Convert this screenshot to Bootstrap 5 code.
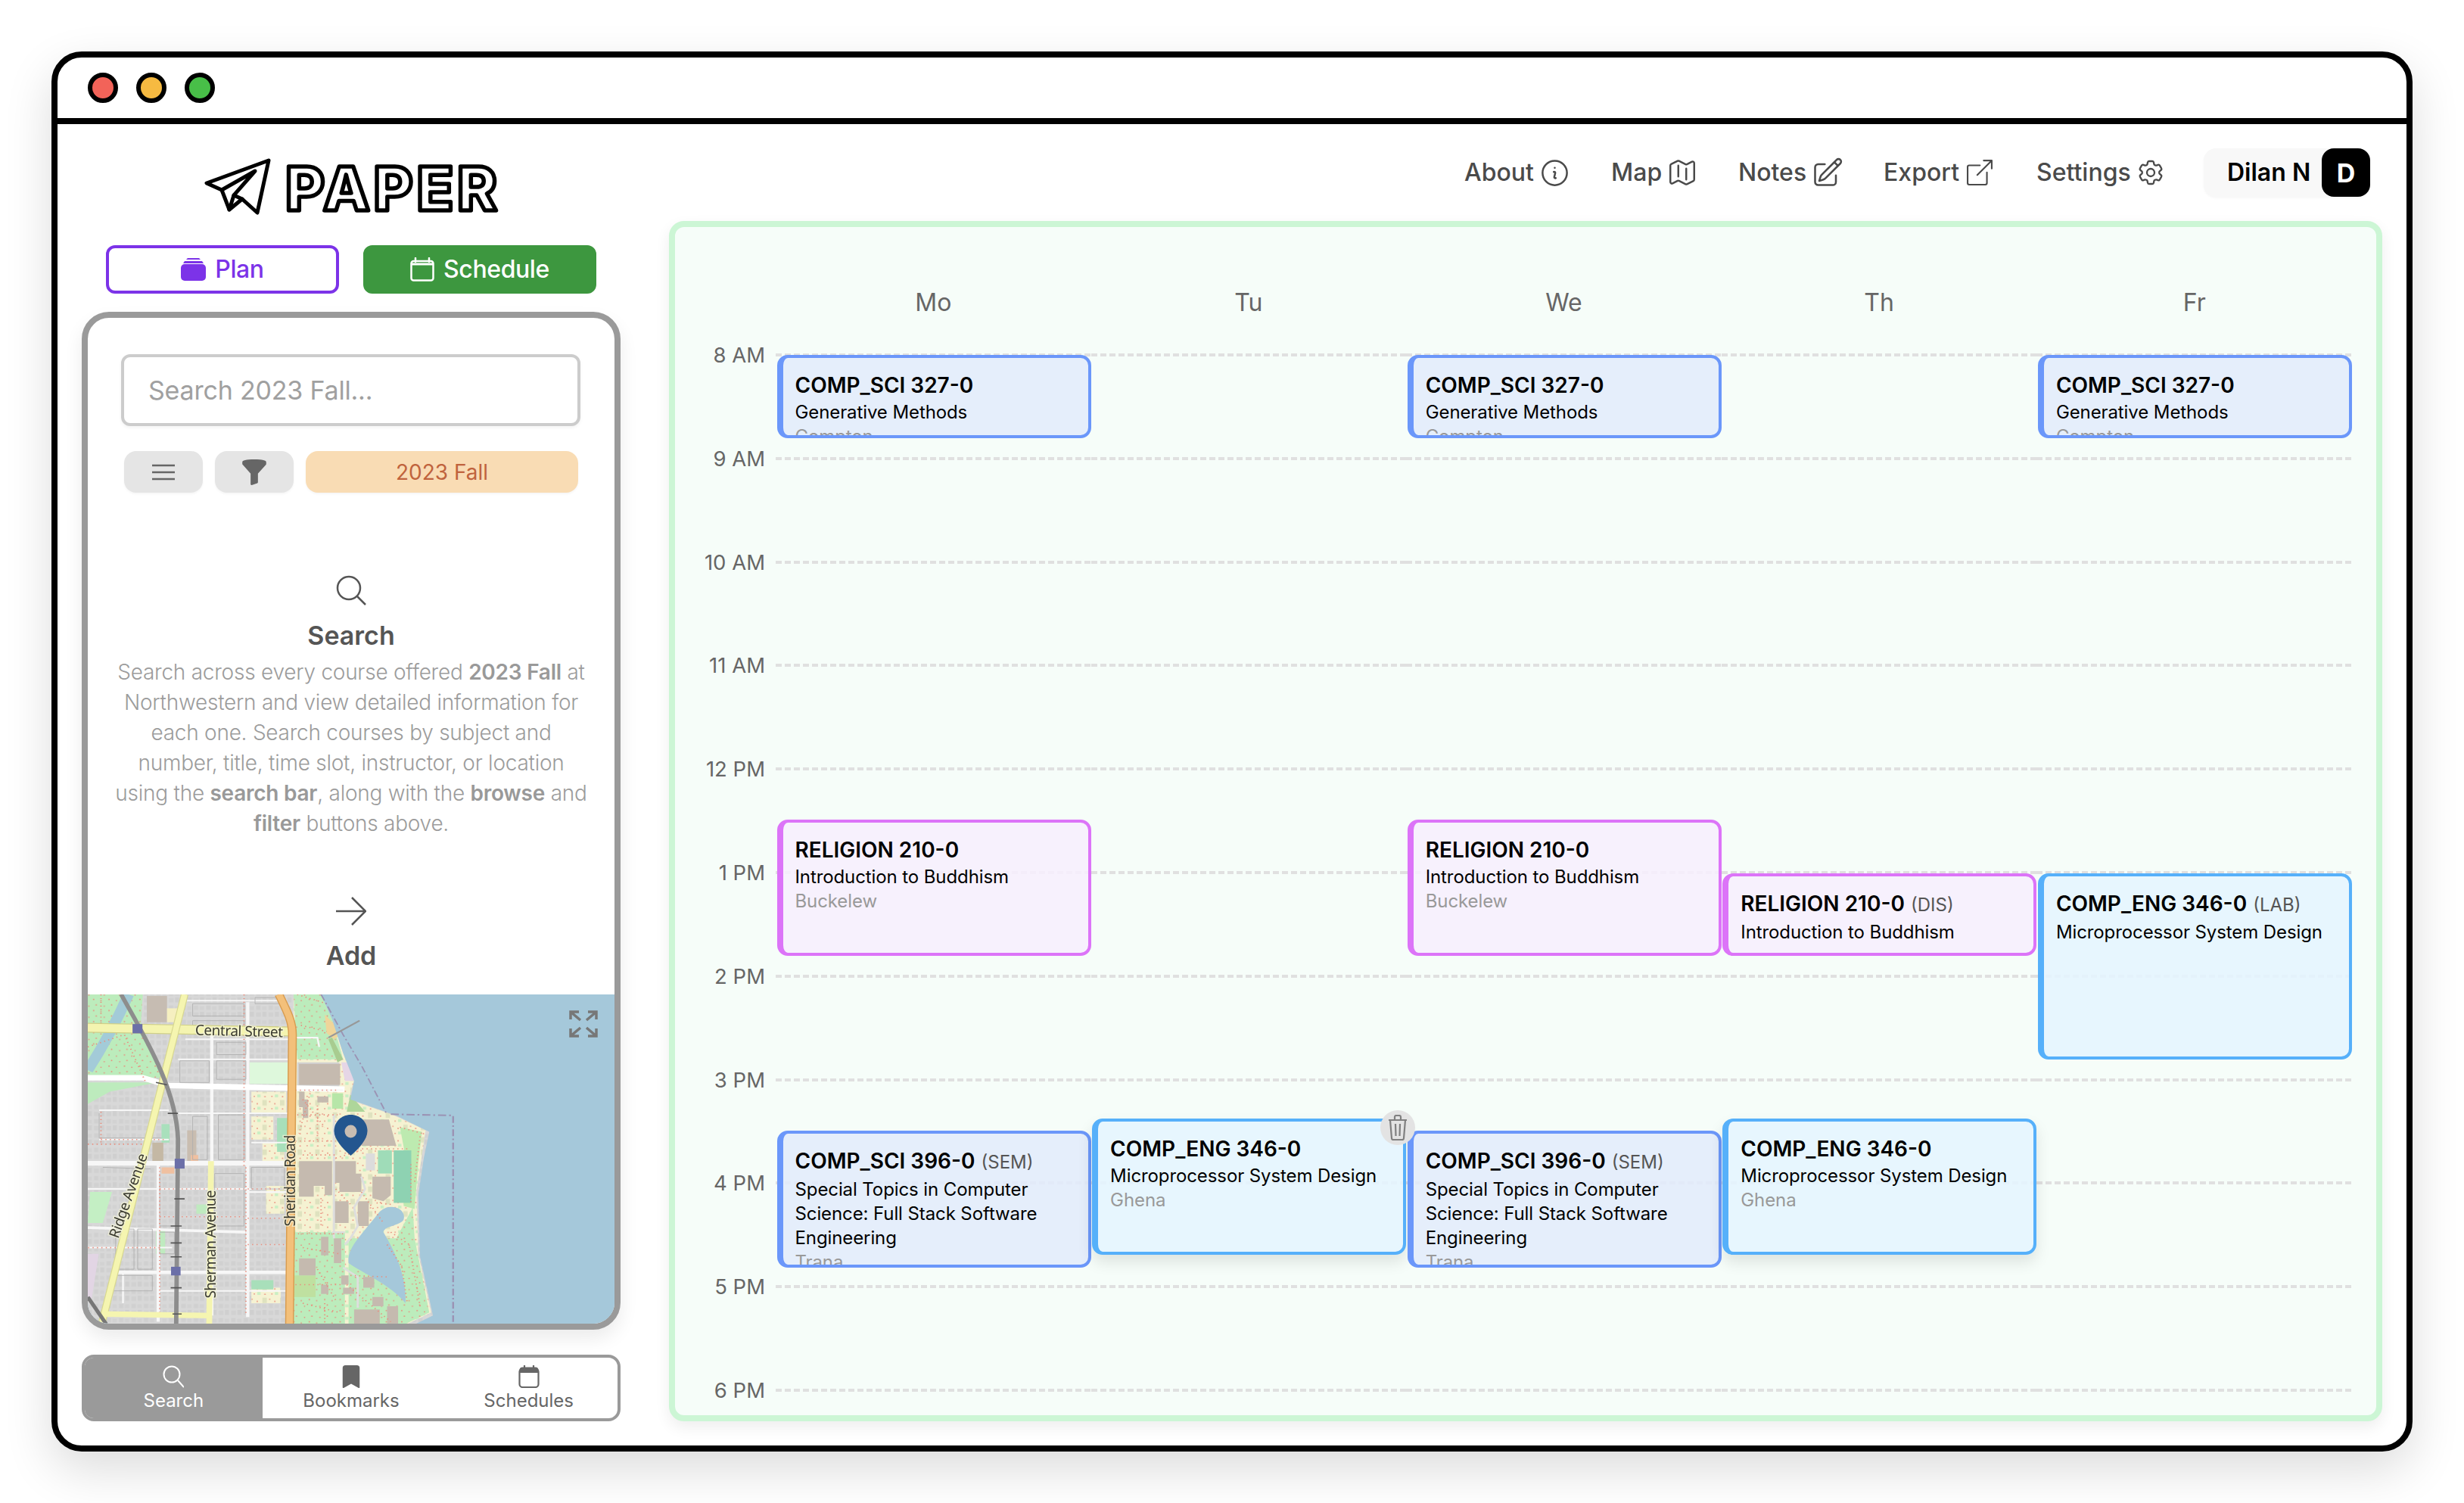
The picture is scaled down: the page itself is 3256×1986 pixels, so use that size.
<!doctype html>
<html lang="en">
<head>
<meta charset="utf-8">
<title>Paper</title>
<link href="https://cdn.jsdelivr.net/npm/bootstrap@5.3.0/dist/css/bootstrap.min.css" rel="stylesheet">
<style>
html,body{background:#fff;margin:0;height:1986px;overflow:hidden;font-family:Inter,"Liberation Sans",sans-serif}
svg{display:block;flex:none}
.win{margin:68px 0 0 68px;width:3120px;height:1850px;border:8px solid #000;border-radius:40px;background:#fff;box-shadow:0 24px 64px rgba(0,0,0,.14);overflow:hidden}
.titlebar{height:80px;border-bottom:8px solid #000;padding-left:40px;gap:24px;box-sizing:content-box}
.tl{width:40px;height:40px;border-radius:50%;border:6px solid #000}
.main-area{height:1746px}
.leftcol{width:744px;padding-left:32px;flex:none}
.logo{height:76px;margin-top:44px;margin-bottom:40px;gap:14px;padding-left:162px}
.logotext{font-family:Inter,sans-serif;font-weight:800;font-size:80px;fill:#fff;stroke:#000;stroke-width:5.5px;stroke-linejoin:round}
.modes{padding:0 32px;gap:32px;margin-bottom:24px}
.modebtn{flex:1 1 0;height:64px;border-radius:12px;font-size:32px;font-weight:500;line-height:1;padding:0;gap:12px;border:4px solid transparent;letter-spacing:-.4px}
.modeplan,.modeplan:hover{border-color:#7c33e8;color:#7c33e8;background:#fff}
.modesched,.modesched:hover{border-color:#3d973f;background:#3d973f;color:#fff}
.panel{height:1345px;border:8px solid #9a9a9a;border-radius:36px;box-shadow:0 12px 24px rgba(0,0,0,.08);overflow:hidden;background:#fff}
.searchbox.form-control{margin:48px 45px 0 44px;width:607px;height:95px;flex:none;border:4px solid #ccc;border-radius:12px;font-size:34px;padding:0 32px;box-shadow:0 2px 4px rgba(0,0,0,.05);color:#555;letter-spacing:-.2px}
.searchbox::placeholder{color:#a0a0a0}
.filterrow{margin:33px 48px 0;gap:16px;height:55px;flex:none}
.chip{height:55px;border-radius:16px;background:#e5e5e5;width:104px;box-shadow:0 2px 3px rgba(0,0,0,.04)}
.chipterm{flex:1;width:auto;background:#f9dcb4;color:#c0633d;font-size:28px;font-weight:400}
.helpzone{flex:1;min-height:0;overflow:hidden;color:#555}
.helphead{font-size:34px;font-weight:600;line-height:56px;color:#555}
.helptext{font-size:28px;line-height:40px;color:#9c9c9c;font-weight:300;padding:0 20px;margin:0;letter-spacing:-.25px}
.helptext b{font-weight:600;color:#999}
.mapwrap{height:435px;flex:none;overflow:hidden;position:relative;background:#a5c8da}
.mapwrap svg.base{filter:blur(.7px)}
.fsicon{position:absolute;right:22px;top:21px}
.maplabel{font-family:"Noto Sans",sans-serif;fill:#3a3a30;paint-order:stroke;stroke:#f4f4d8;stroke-width:3px;stroke-opacity:.7}
.tabsbar{height:88px;margin-top:33px;border:4px solid #9a9a9a;border-radius:16px;overflow:hidden;background:#fff}
.tabitem{flex:1 1 0;font-size:24px;line-height:30px;color:#666;gap:2px;padding-top:10px}
.tabon{background:#9a9a9a;color:#fff}
.rightcol{margin-left:64px;width:2264px;flex:none}
.topnav{position:relative;height:128px;padding-right:16px;font-size:32px;font-weight:500;color:#4a4a4a}
.navlink{display:flex;align-items:center;gap:6px;position:absolute;top:0;height:128px}
.profile{position:absolute;right:16px;top:32px;width:220px;height:64px;background:#f8f8f8;border-radius:16px;padding-left:31px;color:#000;font-weight:600;box-shadow:0 2px 3px rgba(0,0,0,.03)}
.avatar{width:64px;height:64px;border-radius:16px;background:#000;color:#fff;position:absolute;right:0;top:0;font-weight:700;font-size:34px}
.cal{position:relative;height:1586px;border:8px solid #ccf6d5;border-radius:20px;background:#f6fdf9;box-shadow:0 8px 20px rgba(0,0,0,.07)}
.dayhead{height:167px;padding-left:133px;padding-right:32px}
.dayname{flex:1 1 0;text-align:center;font-size:32px;line-height:40px;color:#666;padding-top:80px}
.hourrow{height:136.8px;padding-right:32px}
.hourlabel{width:119px;margin-right:14px;text-align:right;font-size:27.5px;line-height:40px;color:#666;margin-top:-18px;flex:none}
.cell{flex:1 1 0;height:4px;background:repeating-linear-gradient(90deg,#e0e0e0 0 8px,transparent 8px 12px)}
.evlayer{position:absolute;left:133px;top:167px;width:2083px;height:1368px;display:grid;grid-template-columns:repeat(5,1fr)}
.evcol{position:relative}
.ev{position:absolute;left:1.5px;right:0;border-style:solid;border-width:4px 4px 4px 8px;border-radius:14px;padding:16px;overflow:hidden;font-size:24px;line-height:32px;color:#000;letter-spacing:-.1px}
.ev h6{font-size:28px;line-height:40px;font-weight:600;margin:-4px 0 0;padding-top:4px;white-space:nowrap;color:#000;letter-spacing:0}
.ev h6 span{font-size:24px;font-weight:400;color:#555;margin-left:1px}
.ev div.who{color:#999}
.evblue{border-color:#6b97fa;background:rgba(226,235,252,.85)}
.evpink{border-color:#dc74f8;background:rgba(247,238,254,.85)}
.evsky{border-color:#56b0fa;background:rgba(228,244,255,.85)}
.evlift{box-shadow:0 10px 20px rgba(0,0,0,.1)}
.trashbadge{position:absolute;left:382px;top:1000px;width:46px;height:46px;border-radius:50%;background:#e3e3e3;z-index:3}
</style>
</head>
<body>
<div class="win">
  <div class="titlebar d-flex align-items-center">
    <div class="tl" style="background:#f26359"></div>
    <div class="tl" style="background:#f6ba41"></div>
    <div class="tl" style="background:#48bf48"></div>
  </div>
  <div class="main-area d-flex">
    <div class="leftcol">
      <div style="width:712px">
        <div class="logo d-flex align-items-center">
          <svg width="90" height="76" viewBox="0 0 90 76" fill="none" stroke="#000" stroke-width="5" stroke-linejoin="round" stroke-linecap="round"><path d="M85 4 3 34l20 9 10 26 17-14 20 18z"/><path d="M23 43 67 18 39 50l-6 19"/><path d="M39 50l11 5"/></svg>
          <svg width="300" height="76" viewBox="0 0 300 76"><text class="logotext" x="3" y="70" textLength="280" lengthAdjust="spacing">PAPER</text></svg>
        </div>
        <div class="modes d-flex">
          <button class="btn modebtn modeplan d-flex align-items-center justify-content-center">
            <svg width="33" height="30" viewBox="0 0 33 30" fill="#7c33e8"><path d="M9 0h15l2 2H7z"/><path d="M5 4h23l2 3H3z"/><rect y="8" width="33" height="22" rx="5"/></svg>Plan</button>
          <button class="btn modebtn modesched d-flex align-items-center justify-content-center">
            <svg width="32" height="32" viewBox="0 0 32 32" fill="none" stroke="#fff" stroke-width="2.5"><rect x="1.5" y="5" width="29" height="25.5" rx="3"/><path d="M1.5 9h29" stroke-width="3"/><path d="M7 1v5M25 1v5" stroke-linecap="round"/></svg>Schedule</button>
        </div>
        <div class="panel d-flex flex-column">
          <input class="form-control searchbox" type="text" placeholder="Search 2023 Fall...">
          <div class="filterrow d-flex">
            <div class="chip d-flex align-items-center justify-content-center">
              <svg width="30" height="22" viewBox="0 0 30 22" stroke="#666" stroke-width="2.5"><path d="M0 2h30M0 11h30M0 20h30"/></svg>
            </div>
            <div class="chip d-flex align-items-center justify-content-center">
              <svg width="34" height="34" viewBox="1 1 14 14" fill="#666"><path d="M1.5 2.5c0-1 2-1.5 6.500-1.500s6.500.5 6.500 1.500v1c0 .2-.05.25-.13.34L10 8.700v4.800c0 .2-.13.4-.34.470l-3 1c-.32.110-.66-.130-.66-.470V8.700L1.630 3.830A.5.5 0 0 1 1.500 3.500z"/></svg>
            </div>
            <div class="chip chipterm d-flex align-items-center justify-content-center">2023 Fall</div>
          </div>
          <div class="helpzone text-center">
            <svg class="mx-auto" style="margin-top:109px" width="40" height="40" viewBox="0 0 40 40" fill="none" stroke="#555" stroke-width="2.500"><circle cx="17" cy="17" r="15"/><path d="m28 28 11 11"/></svg>
            <div class="helphead" style="margin-top:12px">Search</div>
            <p class="helptext">Search across every course offered <b>2023 Fall</b> at<br>Northwestern and view detailed information for<br>each one. Search courses by subject and<br>number, title, time slot, instructor, or location<br>using the <b>search bar</b>, along with the <b>browse</b> and<br><b>filter</b> buttons above.</p>
            <svg class="mx-auto" style="margin-top:76px" width="40" height="40" viewBox="0 0 40 40" fill="none" stroke="#555" stroke-width="2.500"><path d="M0 20h38M21 2l18 18-18 18"/></svg>
            <div class="helphead" style="margin-top:11px">Add</div>
          </div>
          <div class="mapwrap">
            <svg class="base" width="696" height="435" viewBox="0 0 696 435">
              <defs>
                <pattern id="houses" width="34" height="46" patternUnits="userSpaceOnUse"><rect width="34" height="46" fill="#d8d8d8"/><rect x="3" y="4" width="12" height="14" fill="#d0d0d0"/><rect x="19" y="6" width="12" height="12" fill="#d2d2d2"/><rect x="3" y="26" width="13" height="14" fill="#d1d1d1"/><rect x="20" y="24" width="11" height="16" fill="#cfcfcf"/></pattern>
                <pattern id="campus" width="48" height="40" patternUnits="userSpaceOnUse"><rect width="48" height="40" fill="#f5f2d2"/><rect x="2" y="2" width="12" height="18" fill="#dfe2bf"/><circle cx="22" cy="7" r="2" fill="#e98d7d"/><circle cx="36" cy="14" r="2" fill="#e98d7d"/><circle cx="9" cy="31" r="2" fill="#e98d7d"/><circle cx="28" cy="30" r="2" fill="#e98d7d"/><rect x="36" y="24" width="9" height="9" fill="#c9efc3"/></pattern>
                <pattern id="parkdots" width="42" height="36" patternUnits="userSpaceOnUse"><rect width="42" height="36" fill="#bcecbc"/><circle cx="6" cy="8" r="2" fill="#e98d7d"/><circle cx="28" cy="4" r="2" fill="#e98d7d"/><circle cx="15" cy="26" r="2" fill="#e98d7d"/><circle cx="35" cy="22" r="2" fill="#e98d7d"/></pattern>
              </defs>
              <g transform="scale(.4847 .408) translate(-54 -60)">
                <rect x="54" y="60" width="1436" height="1067" fill="url(#houses)"/>
                <path d="M54 60h150l-5 90 60 180H54z" fill="url(#parkdots)"/>
                <path d="M54 345h190l-130 30-60 40z" fill="#bdebbd"/>
                <path d="M60 700h60l-25 100H54z" fill="#c4efc4"/>
                <path d="M54 900h30l-20 150H54z" fill="#e2d5e4"/>
                <path d="M165 60c-30 80-70 170-111 245" stroke="#a3cbd8" stroke-width="30" fill="none"/>
                <rect x="215" y="65" width="55" height="85" fill="#c6bcb2"/>
                <rect x="270" y="105" width="30" height="45" fill="#f5efc0"/>
                <rect x="495" y="280" width="105" height="70" fill="#def8dc"/>
                <rect x="255" y="480" width="22" height="60" fill="#a9e0bc"/>
                <path d="M325 500h25v100h-25z" fill="#c9bdb0"/>
                <path d="M230 540h30v60h-30z" fill="#c4b8a4"/>
                <path d="M500 375h95v70h-95zM500 455h60v75h-60zM530 540h60v60h-60zM540 680h50v90h-50zM500 1010h80v50h-80z" fill="url(#campus)"/>
                <path d="M570 460h30v110h-30zM500 985h60v30h-60z" fill="#a8dfba"/>
                <path d="M255 620h35v20h-35zM335 580h20v20h-20z" fill="#f0c0a0"/>
                <path d="M240 820h25v80h-25zM350 740h30v30h-30z" fill="#bfeabf"/>
                <path d="M615 60h75l30 80 30 110 30 90-15 60 120 50 90 50-10 80-15 120 5 200 35 190-35 20-30 17H615z" fill="url(#campus)"/>
                <path d="M615 60h75l30 80 30 130H625z" fill="url(#parkdots)"/>
                <path d="M625 280h115v80H625z" fill="#d2d2d2"/>
                <rect x="630" y="285" width="112" height="68" fill="#c5baaf"/>
                <path d="M745 280h35v60h-25z" fill="#e6d6e6"/>
                <path d="M700 125l50 60-25 20-20-20z" fill="#efd59a"/>
                <path d="M720 200l30 70-15 10-25-75z" fill="#a8cc90"/>
                <path d="M770 385l40 55h-50z" fill="#aed69a"/>
                <path d="M615 830h140v297H615z" fill="url(#parkdots)"/>
                <path d="M615 970h60v70h-60z" fill="#bfe0a0"/>
                <path d="M765 850h130l45-100 5 100 40 240-35 20-30 17H765z" fill="url(#parkdots)"/>
                <path d="M905 490l60 15-10 100-10 150-30-10 10-130z" fill="#bdeab0"/>
                <path d="M800 465l75 0 20 85H800z" fill="#c5baaf"/>
                <path d="M630 600h90v110h-20v-30h-30v35h-40zM725 600h60v70h-60zM740 640h60v60h-60zM830 650h50v60l-20 20-30-10zM725 730h40v70h-40zM790 730h30v80h-30zM630 915h45v55h-45zM690 845h20v60h-20zM725 850h20v80h-20zM745 970h20v30h-20zM805 975h30v35h-30zM690 1000h20v30h-20zM750 1010h30v20h-30zM830 1040h30v30h-30zM780 1080h70v47h-70zM870 1070h30v57h-30zM640 400h15v60h-15zM680 390h30v20h-30zM630 375h15v50h-15z" fill="#c5baaf"/>
                <rect x="845" y="565" width="38" height="75" fill="#9fdcb8"/><rect x="888" y="565" width="48" height="170" fill="#8ed2b2"/>
                <rect x="812" y="575" width="25" height="55" fill="#dcdcdc"/>
                <path d="M720 380h30v50h-30z" fill="#b7e6a8"/>
                <path d="M690 60l30 80 30 110 30 90-10 60 120 50 95 55-15 85-15 120 5 200 35 190-35 20-30 17H1490V60z" fill="#a5c8da"/>
                <path d="M845 770c25-40 80-20 70 20-10 20-55 20-55 40 20 40 65 130 60 230-40-60-120-100-155-130-5-50 35-90 80-160z" fill="#a5c8da"/>
                <g fill="none" stroke="#f7f7f7" stroke-width="11">
                  <path d="M392 190v410M490 85v1020M246 610v510M392 700v400" stroke-width="9"/>
                  <path d="M54 330h150l70 25 480 12" stroke-width="18" stroke="#fff"/>
                  <path d="M54 607h540" stroke-width="15"/><path d="M120 960h480" stroke-width="11"/><path d="M54 815l430 15" stroke-width="9"/>
                  <path d="M280 445h320M85 435h190M85 530h190M54 690h540M320 80h260M320 205h280M300 270h300M54 880h230M250 1020h350M150 960v100M490 700h110M500 540h100" stroke-width="5"/>
                  <path d="M725 450v400M720 830h35M750 945l40 30v100M800 650l10 40-30 60 10 60-20 40-15 20" stroke="#dedede" stroke-width="6"/>
                  <path d="M620 200h60l5 30M750 370h-125" stroke-width="5"/>
                </g>
                <g fill="none" stroke="#aeaeae" stroke-width="2">
                  <path d="M85 445v80h170M305 275h80v70h-80zM405 215h80v40h-80zM405 275h80v60h-80zM95 620l130 5M250 640v170h50M400 640h80v170h-80zM410 450h70v145h-70zM340 455h40v140h-40zM250 830h40v70h-40zM120 970h110v50H120zM130 820h50v130h-50zM190 820h40v130h-40zM510 70h70v20h-70zM340 90h140v40H340zM340 145h140v40H340zM500 620h90v70h-90z"/>
                </g>
                <g fill="none" stroke="#e98d7d" stroke-width="4" stroke-dasharray="3 9">
                  <path d="M90 60v110M54 230l100-40M150 180l60 160M480 60v560M485 620v480M250 620v480M90 530h180M54 545h160M90 440v100M55 880h200M250 690h230M250 780h230M490 690h110M490 785h110M490 870h110M625 60l80 30M635 160l70 20M620 370h120M625 450h110M640 400l60 90M660 380l-30 130M680 420v120M620 535h110M640 580h90M730 690l40 50M690 720v90M615 835h140M640 880l100 20M620 1000l130 0M640 1060l100 30M680 950l50 100M770 970l100 5M880 830l50 40 30 200M870 870l40 70 15 120M935 610v130M905 490l60 20M960 520l-15 150M880 740l-40-5M800 700l60 100M760 1000l120 120M700 1060v60M790 560h140M730 590l70-25"/>
                </g>
                <path d="M54 168l556 12" stroke="#cfcf88" stroke-width="32" fill="none"/>
                <path d="M54 168l556 12" stroke="#f4f4b0" stroke-width="26" fill="none"/>
                <path d="M318 60 92 1127" stroke="#d8d890" stroke-width="21" fill="none"/>
                <path d="M318 60 92 1127" stroke="#f5f5b0" stroke-width="16" fill="none"/>
                <path d="M95 1095l290 5" stroke="#f5f5b0" stroke-width="18" fill="none"/>
                <path d="M390 600l-5 527" stroke="#f5f5b0" stroke-width="16" fill="none"/>
                <path d="M575 60c25 60 37 90 37 130l-8 937" stroke="#d89c50" stroke-width="24" fill="none"/>
                <path d="M575 60c25 60 37 90 37 130l-8 937" stroke="#f3c07a" stroke-width="18" fill="none"/>
                <path d="M145 60c60 130 150 300 155 470l-5 597" stroke="#8d8d8d" stroke-width="12" fill="none"/>
                <path d="M54 1040l50 87" stroke="#777" stroke-width="11" fill="none"/>
                <g fill="none" stroke="#555" stroke-width="4"><path d="M240 345l30 8M272 445h28M290 722h28M280 810h30M280 865h30M280 910h30M280 1010h30M285 1095h25"/></g>
                <rect x="176" y="156" width="27" height="30" fill="#6b6fa8"/><rect x="291" y="592" width="27" height="32" fill="#6b6fa8"/><rect x="281" y="942" width="26" height="28" fill="#6b6fa8"/>
                <path d="M880 448l170 4v675" fill="none" stroke="#9b93b4" stroke-width="5" stroke-dasharray="22 8 5 8"/>
                <path d="M690 60l60 130 50 100 70 160" fill="none" stroke="#9b93b4" stroke-width="4" stroke-dasharray="22 8 5 8"/>
                <path d="M710 200l85-55" stroke="#989898" stroke-width="5" fill="none"/>
              </g>
              <text class="maplabel" x="142" y="55" font-size="19" textLength="116" transform="rotate(1.500 200 48)">Central Street</text>
              <text class="maplabel" transform="translate(54 266) rotate(-70.500)" text-anchor="middle" y="6" font-size="19" textLength="117">Ridge Avenue</text>
              <text class="maplabel" transform="translate(163 330) rotate(-90)" text-anchor="middle" y="6" font-size="19" textLength="143">Sherman Avenue</text>
              <text class="maplabel" transform="translate(268 246) rotate(-90)" text-anchor="middle" y="6" font-size="19" textLength="121">Sheridan Road</text>
              <path d="M347.500 159c-12.500 0-22 9.500-22 21.500 0 11 11 23 22 32.500 11-9.500 22-21.500 22-32.500 0-12-9.500-21.500-22-21.500z" fill="#23568f"/>
              <ellipse cx="347.500" cy="181" rx="8" ry="8.500" fill="#c8bdb2"/>
            </svg>
            <svg class="fsicon" width="38" height="36" viewBox="0 0 38 36" fill="none" stroke="#777" stroke-width="3.500"><path d="M2 12V2h11M2 2l13 11M36 12V2H25M36 2 23 13M2 24v10h11M2 34l13-11M36 24v10H25M36 34 23 23"/></svg>
          </div>
        </div>
        <div class="tabsbar d-flex">
          <div class="tabitem tabon d-flex flex-column align-items-center">
            <svg width="28" height="30" viewBox="0 0 28 30" fill="none" stroke="#fff" stroke-width="2"><circle cx="12" cy="12" r="10.500"/><path d="m20 20 8 9"/></svg>Search</div>
          <div class="tabitem d-flex flex-column align-items-center">
            <svg width="30" height="30" viewBox="2 0 12 16" fill="#666"><path d="M2 2v13.500a.5.5 0 0 0 .74.439L8 13.069l5.260 2.870A.5.5 0 0 0 14 15.500V2a2 2 0 0 0-2-2H4a2 2 0 0 0-2 2z"/></svg>Bookmarks</div>
          <div class="tabitem d-flex flex-column align-items-center">
            <svg width="28" height="30" viewBox="0 0 28 30" fill="none" stroke="#666" stroke-width="2.200"><rect x="1.500" y="4.500" width="25" height="24.500" rx="4"/><path d="M1.500 5.500a4 4 0 0 1 4-3h17a4 4 0 0 1 4 3V10h-25z" fill="#666" stroke="none"/><path d="M8 0v4M20 0v4"/></svg>Schedules</div>
        </div>
      </div>
    </div>
    <div class="rightcol">
      <div class="topnav">
        <span class="navlink" style="left:1051px">About <svg width="43" height="43" viewBox="0 0 24 24" fill="none" stroke="#4a4a4a" stroke-width="1.400" stroke-linecap="round" stroke-linejoin="round"><path d="M11.250 11.250l.041-.02a.75.75 0 011.063.852l-.708 2.836a.75.75 0 001.063.853l.041-.021M21 12a9 9 0 11-18 0 9 9 0 0118 0zm-9-3.750h.008v.008H12V8.250z"/></svg></span>
        <span class="navlink" style="left:1245px">Map <svg width="42" height="42" viewBox="0 0 24 24" fill="none" stroke="#4a4a4a" stroke-width="1.400" stroke-linecap="round" stroke-linejoin="round"><path d="M9 6.750V15m6-6v8.250m.503 3.498l4.875-2.437c.381-.19.622-.58.622-1.006V4.820c0-.836-.88-1.380-1.628-1.006l-3.869 1.934c-.317.159-.69.159-1.006 0L9.503 3.252a1.125 1.125 0 00-1.006 0L3.622 5.689C3.240 5.880 3 6.270 3 6.695V19.180c0 .836.88 1.380 1.628 1.006l3.869-1.934c.317-.159.69-.159 1.006 0l4.994 2.497c.317.158.69.158 1.006 0z"/></svg></span>
        <span class="navlink" style="left:1413px">Notes <svg width="44" height="44" viewBox="0 0 24 24" fill="none" stroke="#4a4a4a" stroke-width="1.400" stroke-linecap="round" stroke-linejoin="round"><path d="M16.862 4.487l1.687-1.688a1.875 1.875 0 112.652 2.652L10.582 16.070a4.500 4.500 0 01-1.897 1.130L6 18l.8-2.685a4.500 4.500 0 011.130-1.897l8.932-8.931zm0 0L19.500 7.125M18 14v4.750A2.250 2.250 0 0115.750 21H5.250A2.250 2.250 0 013 18.750V8.250A2.250 2.250 0 015.250 6H10"/></svg></span>
        <span class="navlink" style="left:1605px">Export <svg class="ms-1" width="34" height="34" viewBox="0 0 16 16" fill="#4a4a4a"><path fill-rule="evenodd" d="M8.636 3.500a.5.5 0 0 0-.5-.5H1.500A1.500 1.500 0 0 0 0 4.500v10A1.500 1.500 0 0 0 1.500 16h10a1.500 1.500 0 0 0 1.500-1.500V7.864a.5.5 0 0 0-1 0V14.500a.5.5 0 0 1-.5.5h-10a.5.5 0 0 1-.5-.5v-10a.5.5 0 0 1 .5-.5h6.636a.5.5 0 0 0 .5-.5z"/><path fill-rule="evenodd" d="M16 .5a.5.5 0 0 0-.5-.5h-5a.5.5 0 0 0 0 1h3.793L6.146 9.146a.5.5 0 1 0 .708.708L15 1.707V5.500a.5.5 0 0 0 1 0v-5z"/></svg></span>
        <span class="navlink" style="left:1807px">Settings <svg width="40" height="40" viewBox="0 0 24 24" fill="none" stroke="#4a4a4a" stroke-width="1.400" stroke-linecap="round" stroke-linejoin="round"><path d="M9.594 3.940c.09-.542.56-.94 1.110-.94h2.593c.55 0 1.020.398 1.110.94l.213 1.281c.063.374.313.686.645.870.074.040.147.083.22.127.324.196.72.257 1.075.124l1.217-.456a1.125 1.125 0 011.370.49l1.296 2.247a1.125 1.125 0 01-.26 1.431l-1.003.827c-.293.24-.438.613-.431.992a6.759 6.759 0 010 .255c-.007.378.138.75.43.99l1.005.828c.424.35.534.954.26 1.430l-1.298 2.247a1.125 1.125 0 01-1.369.491l-1.217-.456c-.355-.133-.75-.072-1.076.124a6.570 6.570 0 01-.22.128c-.331.183-.581.495-.644.869l-.213 1.280c-.09.543-.56.941-1.110.941h-2.594c-.55 0-1.020-.398-1.110-.94l-.213-1.281c-.062-.374-.312-.686-.644-.87a6.520 6.520 0 01-.22-.127c-.325-.196-.72-.257-1.076-.124l-1.217.456a1.125 1.125 0 01-1.369-.49l-1.297-2.247a1.125 1.125 0 01.26-1.431l1.004-.827c.292-.24.437-.613.43-.992a6.932 6.932 0 010-.255c.007-.378-.138-.75-.43-.99l-1.004-.828a1.125 1.125 0 01-.26-1.430l1.297-2.247a1.125 1.125 0 011.370-.491l1.216.456c.356.133.751.072 1.076-.124.072-.044.146-.087.22-.128.332-.183.582-.495.644-.869l.214-1.281z"/><path d="M15 12a3 3 0 11-6 0 3 3 0 016 0z"/></svg></span>
        <div class="profile d-flex align-items-center">Dilan N<div class="avatar d-flex align-items-center justify-content-center">D</div></div>
      </div>
      <div class="cal">
        <div class="dayhead d-flex">
          <div class="dayname">Mo</div><div class="dayname">Tu</div><div class="dayname">We</div><div class="dayname">Th</div><div class="dayname">Fr</div>
        </div>
        <div class="hourrow d-flex"><div class="hourlabel">8 AM</div><div class="cell"></div><div class="cell"></div><div class="cell"></div><div class="cell"></div><div class="cell"></div></div>
        <div class="hourrow d-flex"><div class="hourlabel">9 AM</div><div class="cell"></div><div class="cell"></div><div class="cell"></div><div class="cell"></div><div class="cell"></div></div>
        <div class="hourrow d-flex"><div class="hourlabel">10 AM</div><div class="cell"></div><div class="cell"></div><div class="cell"></div><div class="cell"></div><div class="cell"></div></div>
        <div class="hourrow d-flex"><div class="hourlabel">11 AM</div><div class="cell"></div><div class="cell"></div><div class="cell"></div><div class="cell"></div><div class="cell"></div></div>
        <div class="hourrow d-flex"><div class="hourlabel">12 PM</div><div class="cell"></div><div class="cell"></div><div class="cell"></div><div class="cell"></div><div class="cell"></div></div>
        <div class="hourrow d-flex"><div class="hourlabel">1 PM</div><div class="cell"></div><div class="cell"></div><div class="cell"></div><div class="cell"></div><div class="cell"></div></div>
        <div class="hourrow d-flex"><div class="hourlabel">2 PM</div><div class="cell"></div><div class="cell"></div><div class="cell"></div><div class="cell"></div><div class="cell"></div></div>
        <div class="hourrow d-flex"><div class="hourlabel">3 PM</div><div class="cell"></div><div class="cell"></div><div class="cell"></div><div class="cell"></div><div class="cell"></div></div>
        <div class="hourrow d-flex"><div class="hourlabel">4 PM</div><div class="cell"></div><div class="cell"></div><div class="cell"></div><div class="cell"></div><div class="cell"></div></div>
        <div class="hourrow d-flex"><div class="hourlabel">5 PM</div><div class="cell"></div><div class="cell"></div><div class="cell"></div><div class="cell"></div><div class="cell"></div></div>
        <div class="hourrow d-flex" style="height:35px"><div class="hourlabel">6 PM</div><div class="cell"></div><div class="cell"></div><div class="cell"></div><div class="cell"></div><div class="cell"></div></div>
        <div class="evlayer">
          <div class="evcol">
            <div class="ev evblue" style="top:2px;height:110px"><h6>COMP_SCI 327-0</h6><div>Generative Methods</div><div class="who">Compton</div></div>
            <div class="ev evpink" style="top:616px;height:180px"><h6>RELIGION 210-0</h6><div>Introduction to Buddhism</div><div class="who">Buckelew</div></div>
            <div class="ev evblue" style="top:1027px;height:181px"><h6>COMP_SCI 396-0 <span>(SEM)</span></h6><div>Special Topics in Computer Science: Full Stack Software Engineering</div><div class="who">Trana</div></div>
          </div>
          <div class="evcol">
            <div class="ev evsky evlift" style="top:1011px;height:180px"><h6>COMP_ENG 346-0</h6><div>Microprocessor System Design</div><div class="who">Ghena</div></div>
            <div class="trashbadge d-flex align-items-center justify-content-center"><svg width="26" height="34" viewBox="0 0 26 34" fill="none" stroke="#808080" stroke-width="2.200"><path d="M1 7h24M3 7l2 24a2 2 0 0 0 2 2h12a2 2 0 0 0 2-2l2-24M9 7V3a2 2 0 0 1 2-2h4a2 2 0 0 1 2 2v4M10 12l.5 16M16 12l-.5 16"/></svg></div>
          </div>
          <div class="evcol">
            <div class="ev evblue" style="top:2px;height:110px"><h6>COMP_SCI 327-0</h6><div>Generative Methods</div><div class="who">Compton</div></div>
            <div class="ev evpink" style="top:616px;height:180px"><h6>RELIGION 210-0</h6><div>Introduction to Buddhism</div><div class="who">Buckelew</div></div>
            <div class="ev evblue" style="top:1027px;height:181px"><h6>COMP_SCI 396-0 <span>(SEM)</span></h6><div>Special Topics in Computer Science: Full Stack Software Engineering</div><div class="who">Trana</div></div>
          </div>
          <div class="evcol">
            <div class="ev evpink" style="top:687px;height:109px"><h6>RELIGION 210-0 <span>(DIS)</span></h6><div>Introduction to Buddhism</div></div>
            <div class="ev evsky evlift" style="top:1011px;height:180px"><h6>COMP_ENG 346-0</h6><div>Microprocessor System Design</div><div class="who">Ghena</div></div>
          </div>
          <div class="evcol">
            <div class="ev evblue" style="top:2px;height:110px"><h6>COMP_SCI 327-0</h6><div>Generative Methods</div><div class="who">Compton</div></div>
            <div class="ev evsky" style="top:687px;height:246px"><h6>COMP_ENG 346-0 <span>(LAB)</span></h6><div>Microprocessor System Design</div></div>
          </div>
        </div>
      </div>
    </div>
  </div>
</div>
<script src="https://cdn.jsdelivr.net/npm/bootstrap@5.3.0/dist/js/bootstrap.bundle.min.js"></script>
</body>
</html>
